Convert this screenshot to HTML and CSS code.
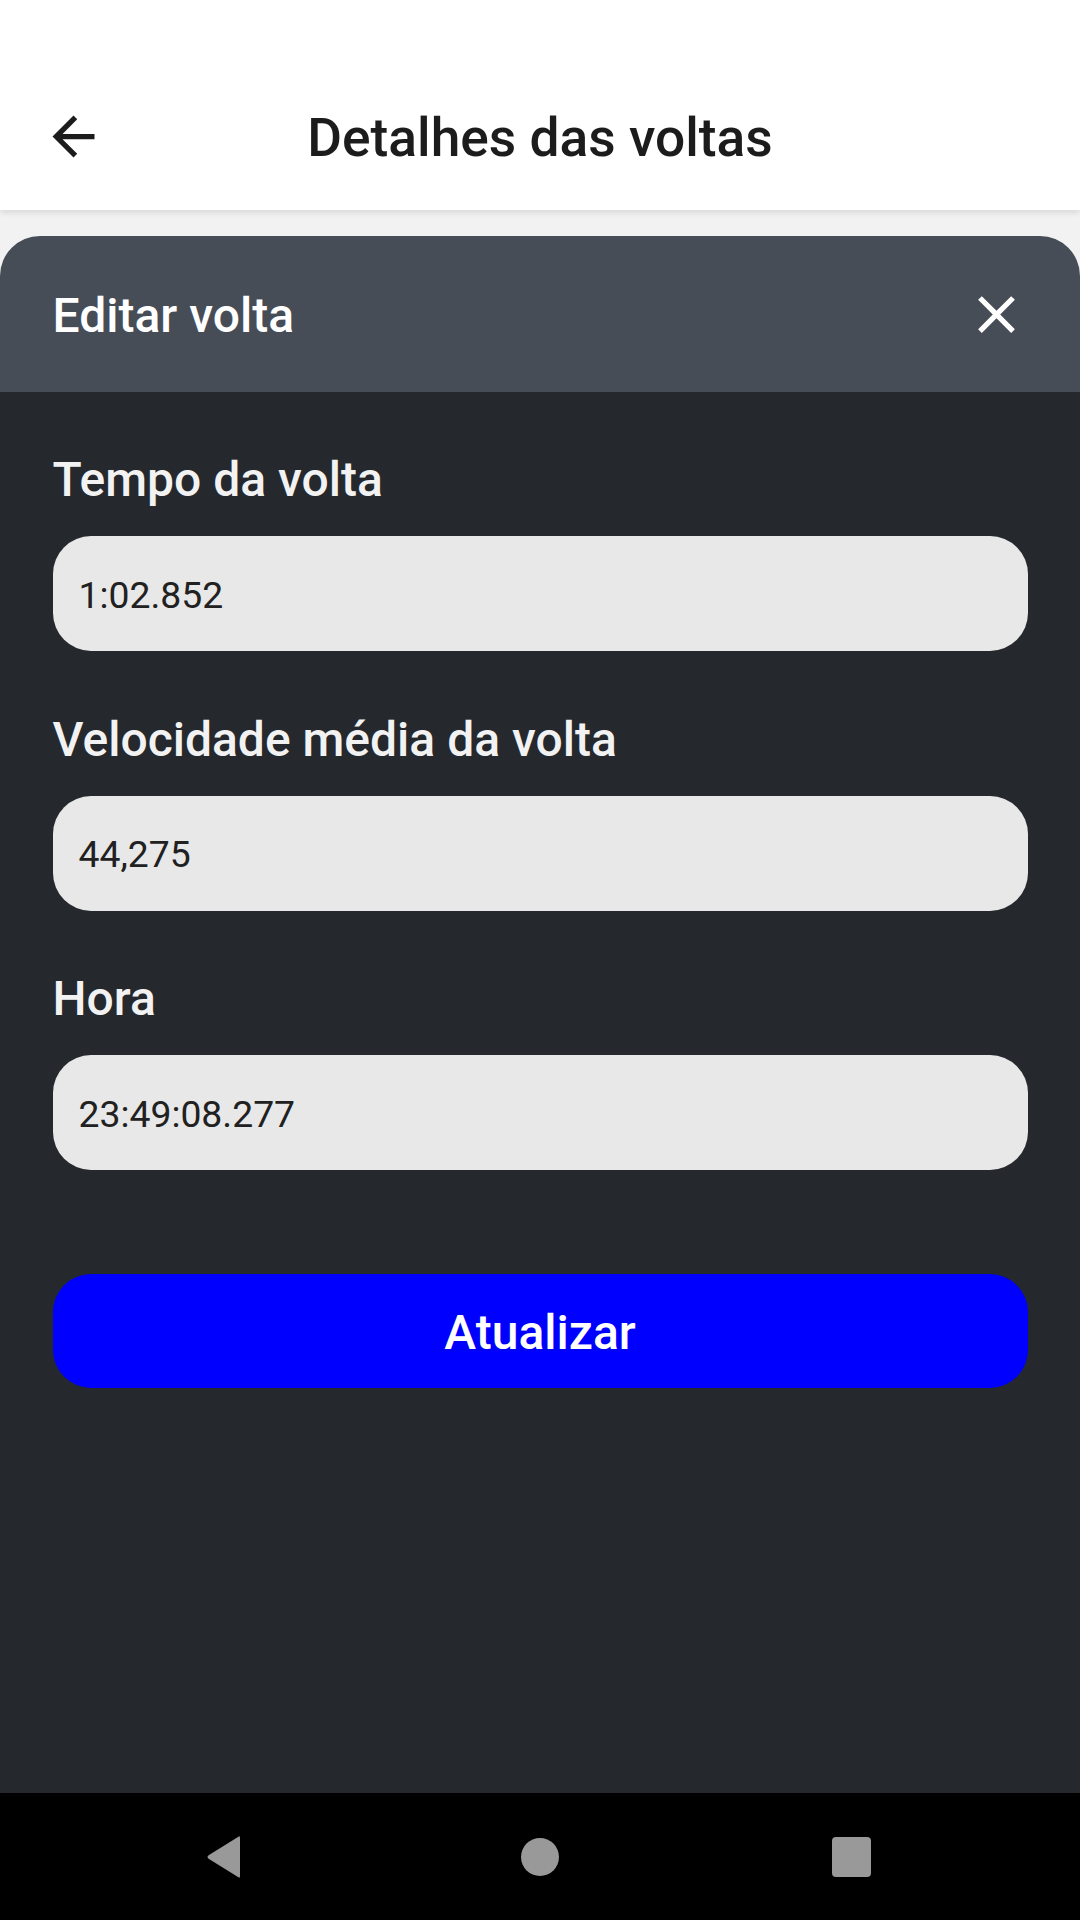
FILE: index.html
```html
<!DOCTYPE html>
<html lang="pt">
<head>
<meta charset="utf-8">
<title>Detalhes das voltas</title>
<link rel="stylesheet" href="styles.css">
</head>
<body>
<div class="screen">
  <header class="appbar">
    <div class="appbar-row">
      <button class="icon-btn back" aria-label="Voltar">
        <svg viewBox="0 0 24 24" width="63" height="63"><path d="M20 11H7.83l5.59-5.59L12 4l-8 8 8 8 1.41-1.41L7.83 13H20v-2z" fill="#1c1c1c"/></svg>
      </button>
      <h1 class="appbar-title">Detalhes das voltas</h1>
      <span class="spacer"></span>
    </div>
  </header>

  <main class="sheet-area">
    <section class="sheet">
      <div class="sheet-header">
        <h2 class="sheet-title">Editar volta</h2>
        <button class="icon-btn close" aria-label="Fechar">
          <svg viewBox="0 0 24 24" width="63" height="63"><path d="M19 6.41L17.59 5 12 10.59 6.41 5 5 6.41 10.59 12 5 17.59 6.41 19 12 13.41 17.59 19 19 17.59 13.41 12z" fill="#ffffff"/></svg>
        </button>
      </div>
      <div class="sheet-body">
        <div class="field">
          <label class="field-label">Tempo da volta</label>
          <div class="field-input">1:02.852</div>
        </div>
        <div class="field">
          <label class="field-label">Velocidade média da volta</label>
          <div class="field-input">44,275</div>
        </div>
        <div class="field">
          <label class="field-label">Hora</label>
          <div class="field-input">23:49:08.277</div>
        </div>
        <button class="primary-btn">Atualizar</button>
      </div>
    </section>
  </main>

  <nav class="navbar">
    <span class="nav-cell">
      <svg width="40" height="44" viewBox="0 0 40 44"><path d="M36 3 L36 41 Q36 44 34 42 L5 24 Q2 22 5 20 L34 2 Q36 0 36 3 Z" fill="#999"/></svg>
    </span>
    <span class="nav-cell"><span class="nav-circle"></span></span>
    <span class="nav-cell"><span class="nav-square"></span></span>
  </nav>
</div>
</body>
</html>
```

FILE: styles.css
```css
html, body {
  margin: 0;
  padding: 0;
}
body {
  font-family: Roboto, "Noto Sans", "Liberation Sans", sans-serif;
  background: #f2f2f2;
}
.screen {
  width: 1080px;
  height: 1920px;
  display: flex;
  flex-direction: column;
  overflow: hidden;
}
.appbar {
  height: 210px;
  box-sizing: border-box;
  padding-top: 63px;
  background: #ffffff;
  box-shadow: 0 3px 6px rgba(0, 0, 0, 0.10);
  position: relative;
  z-index: 1;
  flex: none;
}
.appbar-row {
  height: 147px;
  display: grid;
  grid-template-columns: 147px 1fr 147px;
  align-items: center;
}
.icon-btn {
  width: 63px;
  height: 63px;
  padding: 0;
  border: 0;
  background: none;
  display: block;
}
.icon-btn svg {
  display: block;
}
.back {
  margin-left: 42px;
}
.appbar-title {
  margin: 0;
  padding-top: 2px;
  text-align: center;
  font-size: 53.3px;
  font-weight: 500;
  color: #1c1c1c;
}
.sheet-area {
  flex: 1;
  display: flex;
  flex-direction: column;
  padding-top: 26px;
  background: #f2f2f2;
}
.sheet {
  flex: 1;
  display: flex;
  flex-direction: column;
  border-radius: 40px 40px 0 0;
  overflow: hidden;
}
.sheet-header {
  height: 156px;
  flex: none;
  background: #474d57;
  display: flex;
  align-items: center;
  justify-content: space-between;
  padding: 0 52.5px;
}
.sheet-title {
  margin: 0;
  padding-top: 3px;
  font-size: 48px;
  font-weight: 500;
  color: #ffffff;
}
.sheet-body {
  flex: 1;
  background: #25282d;
  padding: 60px 52.5px 0;
  display: flex;
  flex-direction: column;
}
.field {
  display: flex;
  flex-direction: column;
  margin-bottom: 60.5px;
}
.field-label {
  font-size: 48px;
  line-height: 56px;
  font-weight: 500;
  color: #f2f2f2;
  margin-bottom: 28px;
}
.field-input {
  height: 115px;
  box-sizing: border-box;
  background: #e8e8e8;
  border-radius: 38px;
  padding: 0 26px;
  display: flex;
  align-items: center;
  font-size: 37.3px;
  color: #212121;
  padding-top: 2px;
}
.primary-btn {
  margin-top: 43px;
  height: 114px;
  border: 0;
  border-radius: 38px;
  background: #0000ff;
  color: #ffffff;
  font-family: Roboto, "Noto Sans", "Liberation Sans", sans-serif;
  font-size: 48px;
  font-weight: 500;
  padding-top: 5px;
}
.navbar {
  height: 127px;
  flex: none;
  background: #000000;
  display: grid;
  grid-template-columns: repeat(3, 315px);
  justify-content: center;
  align-items: center;
}
.nav-cell {
  display: flex;
  justify-content: center;
  align-items: center;
}
.nav-cell svg {
  display: block;
  margin-left: -3px;
}
.nav-circle {
  width: 38px;
  height: 38px;
  border-radius: 50%;
  background: #999999;
}
.nav-square {
  width: 39px;
  height: 40px;
  border-radius: 4px;
  background: #999999;
  margin-left: -8px;
}
```
